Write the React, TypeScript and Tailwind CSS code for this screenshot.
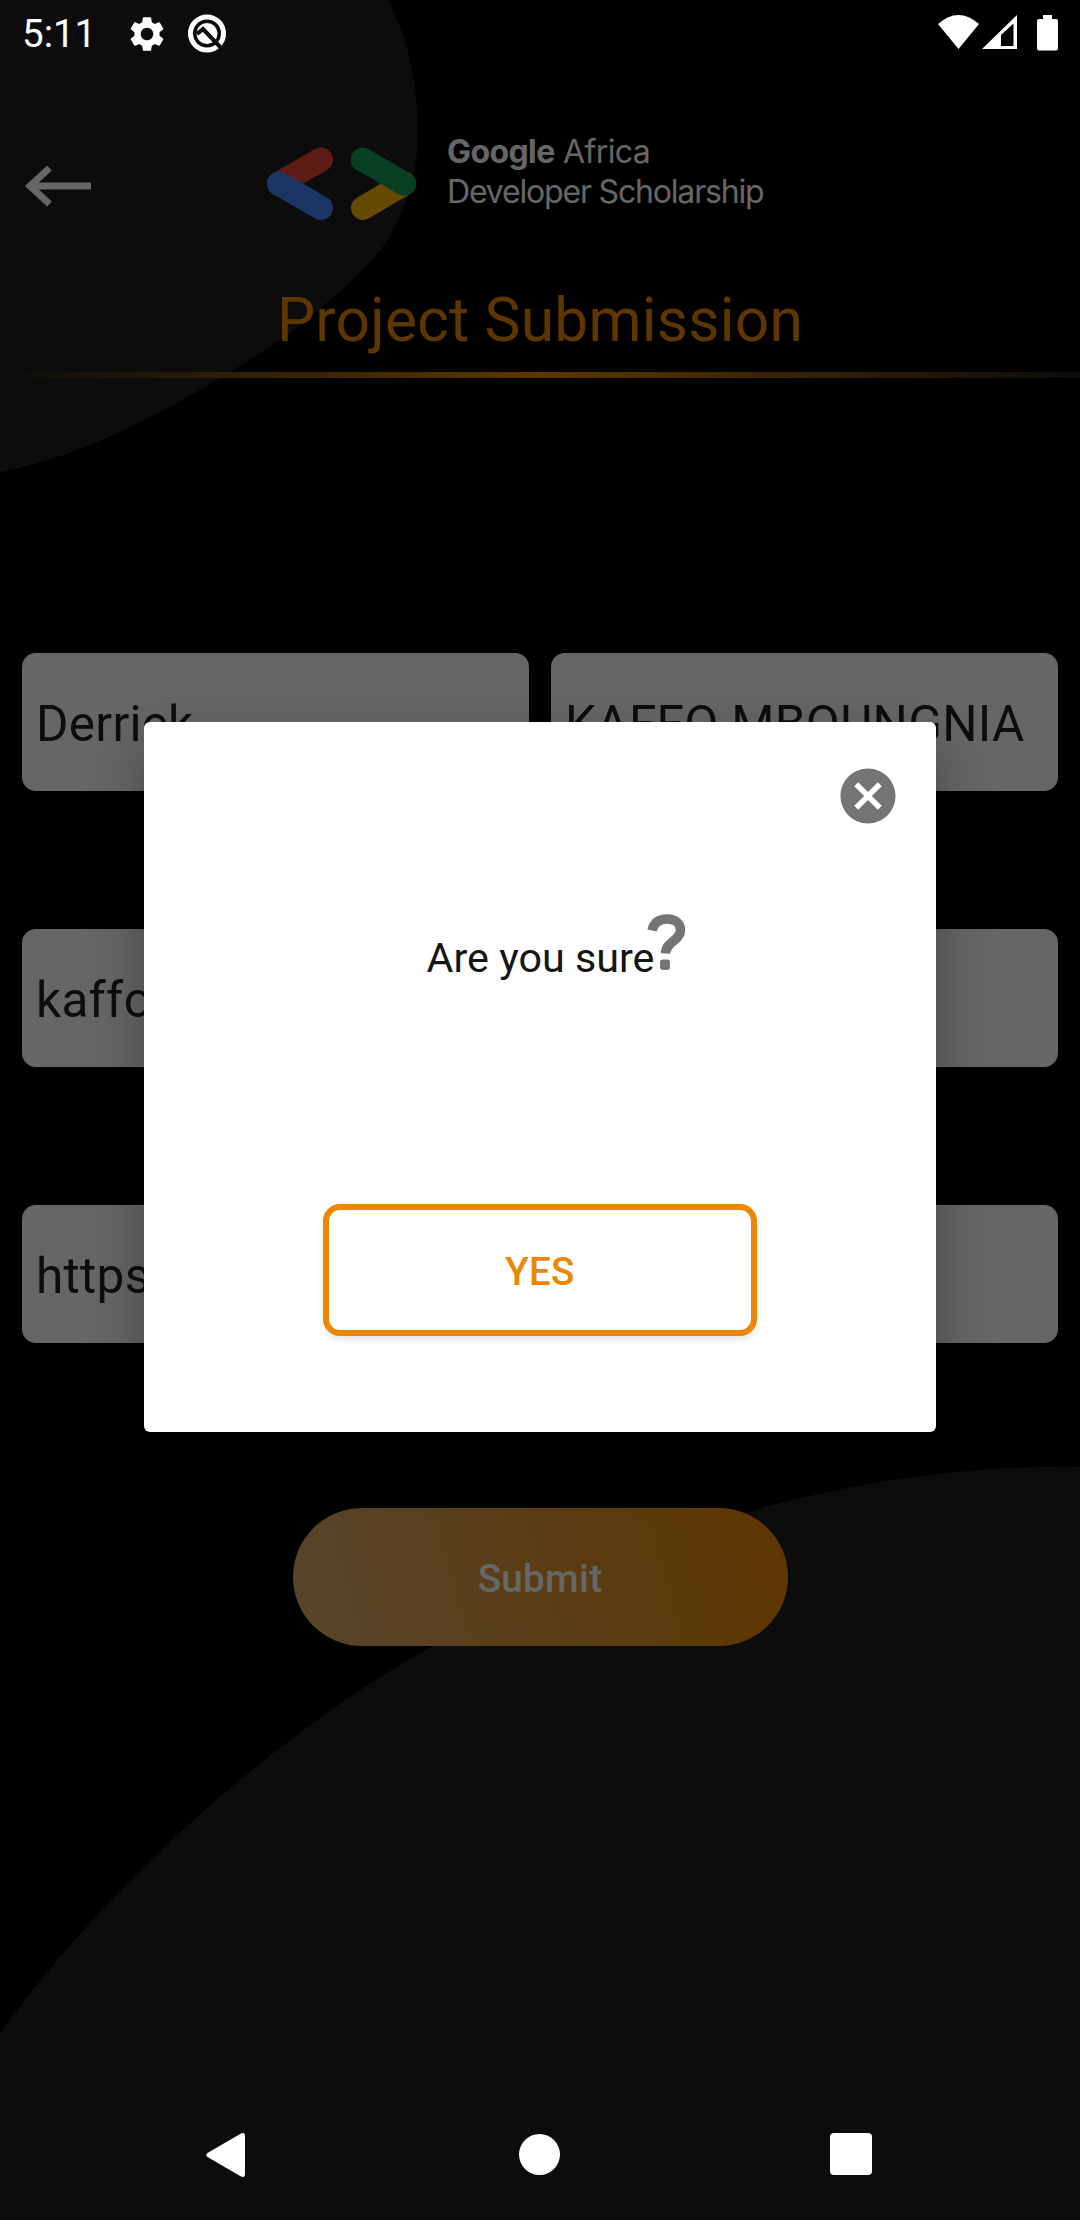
import React from "react";
import { MdCancel, MdSettings } from "react-icons/md";

function Backdrop() {
  return (
    <svg className="absolute inset-0" width="1080" height="2220" viewBox="0 0 1080 2220" fill="#1e1e1e" aria-hidden="true">
      <path d="M0 0H389C408 40 418 85 418 130C418 172 408 205 388 239C380 252 371 262 362 270C325 308 285 338 240 366C165 412 85 456 0 472Z" />
      <path d="M0 2033C110 1882 270 1738 432 1646C530 1590 640 1542 747 1512C850 1482 965 1465 1080 1467V2220H0Z" />
    </svg>
  );
}

function StatusBar() {
  return (
    <div className="relative z-20 flex h-[66px] items-center pl-[22px] pr-5 text-white">
      <span className="w-[104px] pt-[3px] text-[38.5px] leading-none">5:11</span>
      <MdSettings className="mt-[2px] h-[42px] w-[42px]" />
      <svg className="ml-[18px] mt-px" width="42" height="42" viewBox="0 0 42 42" fill="none">
        <circle cx="21" cy="20.5" r="16.5" stroke="#fff" strokeWidth="5" />
        <circle cx="21" cy="20.5" r="10.5" fill="#fff" />
        <path d="M11 21L17 16L38 38" stroke="#0c0c0c" strokeWidth="4" />
      </svg>
      <svg className="ml-auto" width="122" height="38" viewBox="0 0 122 38" fill="#fff">
        <path d="M0 10Q20.500 -8 41 10L20.500 35Z" />
        <path fillRule="evenodd" d="M44 35L79 1V35ZM63 21V32H75.500V9.500Z" />
        <path d="M105 1H114V5H118Q120 5 120 7V34.500Q120 36.500 118 36.500H101Q99 36.500 99 34.500V7Q99 5 101 5H105Z" />
      </svg>
    </div>
  );
}

function Header() {
  return (
    <header className="flex h-[180px] items-start">
      <svg className="ml-[22px] mt-[97px]" width="74" height="46" viewBox="0 0 74 46" fill="none" stroke="#fff" strokeWidth="7">
        <path d="M69 23H8" />
        <path d="M27.500 5L8 23L27.500 41" strokeMiterlimit="8" />
      </svg>
      <svg className="ml-[169px] mt-[79px]" width="155" height="78" viewBox="265 145 155 78" strokeWidth="24" strokeLinecap="round">
        <path d="M321 159.500L279 183.700" stroke="#ea4335" />
        <path d="M279 183.700L321 208" stroke="#4285f4" />
        <path d="M363 208L404 183.700" stroke="#fbbc04" />
        <path d="M362.700 159.500L404 183.700" stroke="#0f9d58" />
      </svg>
      <div className="ml-[27px] mt-[66px] whitespace-nowrap font-[Inter] text-[32px] leading-[39.500px] tracking-[-0.6px] text-white">
        <div><span className="font-bold">Google</span> Africa</div>
        <div className="tracking-[-1.18px]">Developer Scholarship</div>
      </div>
    </header>
  );
}

function Field({ value }: { value: string }) {
  return (
    <div className="flex h-[138px] flex-1 items-center overflow-hidden whitespace-nowrap rounded-[14px] bg-white px-[14px] pt-[5px] text-[49.5px] leading-none tracking-[0.3px] text-[#212121]">
      {value}
    </div>
  );
}

function Dialog() {
  return (
    <div className="absolute inset-0 z-10 flex items-center justify-center bg-black/60 pb-[132px] pt-[66px]">
      <div className="flex h-[710px] w-[792px] flex-col items-center rounded-[6px] bg-white shadow-[0_24px_56px_rgba(0,0,0,0.32)]">
        <button className="mr-[35px] mt-[41px] self-end text-[#757575]" aria-label="Close">
          <MdCancel className="h-[66px] w-[66px]" />
        </button>
        <div className="ml-[33px] mt-[83px] flex h-[70px] items-start">
          <span className="mt-[26px] whitespace-nowrap text-[41.25px] leading-none text-[#141414]">Are you sure</span>
          <svg className="-ml-[8px] mt-[1px]" width="40" height="58" viewBox="0 0 40 58">
            <path d="M6 17.500C8 9 14 6 21 6C29 6 34.500 10 34.500 17C34.500 28 20 28 19.500 40.500" fill="none" stroke="#757575" strokeWidth="9.500" />
            <rect x="14" y="46.500" width="10" height="10.500" rx="3" fill="#757575" />
          </svg>
        </div>
        <button className="mt-[222px] flex h-[132px] w-[434px] items-center justify-center rounded-[17px] border-[6px] border-[#eb8700] bg-white pt-[4px] text-[38.5px] font-medium leading-none tracking-[0.3px] text-[#eb8700] shadow-[0_4px_6px_rgba(0,0,0,0.1)]">
          YES
        </button>
      </div>
    </div>
  );
}

function NavBar() {
  return (
    <nav className="relative z-20 mt-auto flex h-[132px] items-center justify-between pl-[205px] pr-[208px]">
      <svg width="41" height="48" viewBox="0 0 41 48" fill="#fff">
        <path d="M2.500 23Q0 25 2.500 27L36 46.500Q40 48 40 44V6Q40 1.500 36 3.500Z" />
      </svg>
      <span className="ml-[3px] h-[41px] w-[41px] rounded-full bg-white" />
      <span className="h-[42px] w-[42px] rounded-[4px] bg-white" />
    </nav>
  );
}

export default function App() {
  return (
    <div className="relative flex h-[2220px] w-[1080px] flex-col overflow-hidden bg-black font-[Roboto,sans-serif]">
      <Backdrop />
      <StatusBar />
      <main className="relative flex flex-col">
        <Header />
        <h1 className="mt-[39px] text-center text-[60.5px] leading-[71px] tracking-[0.25px] text-[#eb8700]">Project Submission</h1>
        <div className="mt-[16px] h-[6px] bg-[linear-gradient(90deg,#1e1e1e,#eb8700,#1e1e1e)]" />
        <form className="mt-[275px] flex flex-col gap-[138px] px-[22px]">
          <div className="flex gap-[22px]">
            <Field value="Derrick" />
            <Field value="KAFFO MBOUNGNIA" />
          </div>
          <div className="flex"><Field value="kaffo" /></div>
          <div className="flex"><Field value="https" /></div>
        </form>
        <button className="mt-[165px] flex h-[138px] w-[495px] items-center justify-center self-center rounded-full bg-[linear-gradient(74deg,#daac6e,#eb8700)] pt-[5px] text-[38.5px] font-medium leading-none tracking-[0.35px] text-white">
          Submit
        </button>
      </main>
      <Dialog />
      <NavBar />
    </div>
  );
}
